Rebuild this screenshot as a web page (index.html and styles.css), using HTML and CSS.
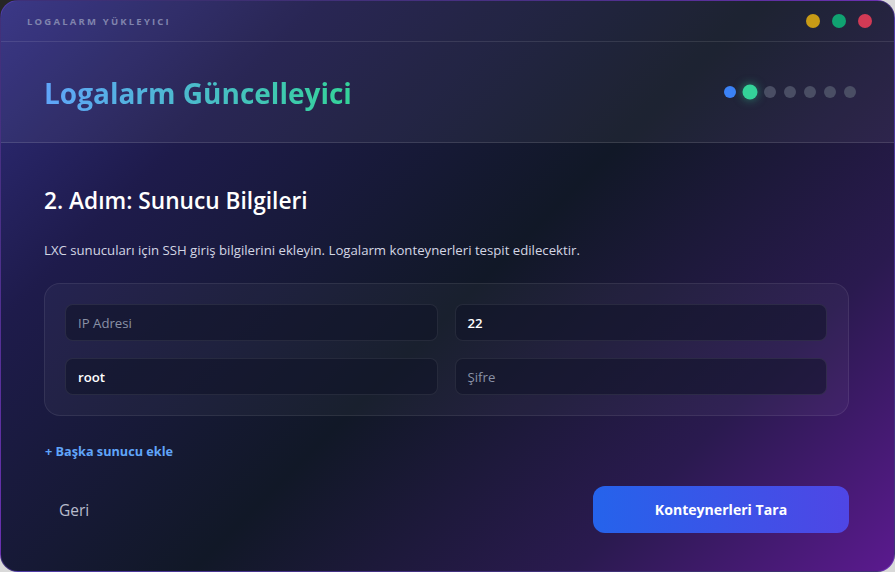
FILE: index.html
```html
<!DOCTYPE html>
<html lang="tr">
<head>
<meta charset="utf-8">
<title>Logalarm Güncelleyici</title>
<link rel="stylesheet" href="styles.css">
</head>
<body>
<div class="window">
  <div class="titlebar">
    <span class="app-label">LOGALARM YÜKLEYICI</span>
    <div class="controls">
      <span class="ctl ctl-min"></span>
      <span class="ctl ctl-max"></span>
      <span class="ctl ctl-close"></span>
    </div>
  </div>
  <div class="header">
    <h1 class="brand">Logalarm Güncelleyici</h1>
    <div class="steps">
      <span class="step done"></span>
      <span class="step active"></span>
      <span class="step"></span>
      <span class="step"></span>
      <span class="step"></span>
      <span class="step"></span>
      <span class="step"></span>
    </div>
  </div>
  <div class="content">
    <h2 class="step-title">2. Adım: Sunucu Bilgileri</h2>
    <p class="step-desc">LXC sunucuları için SSH giriş bilgilerini ekleyin. Logalarm konteynerleri tespit edilecektir.</p>
    <div class="server-card">
      <div class="field placeholder">IP Adresi</div>
      <div class="field value">22</div>
      <div class="field value">root</div>
      <div class="field placeholder">Şifre</div>
    </div>
    <div class="add-server">+ Başka sunucu ekle</div>
    <div class="actions">
      <span class="btn-back">Geri</span>
      <span class="btn-primary">Konteynerleri Tara</span>
    </div>
  </div>
</div>
</body>
</html>
```

FILE: styles.css
```css
* { box-sizing: border-box; margin: 0; padding: 0; }
html, body { width: 895px; height: 572px; overflow: hidden; }
body {
  background: linear-gradient(160deg, #262626 0%, #262626 8%, #d9d9d9 9%, #d9d9d9 100%);
  font-family: "Open Sans", "Noto Sans", sans-serif;
  color: #fff;
}
.window {
  width: 895px;
  height: 572px;
  border-radius: 18px;
  overflow: hidden;
  border: 1px solid rgba(139, 92, 246, 0.35);
  background: linear-gradient(135deg, #312e81 0%, #1e1b4b 22%, #111827 52%, #2a1a4f 78%, #5b1a8f 100%);
  display: flex;
  flex-direction: column;
}
.titlebar {
  height: 41px;
  flex: none;
  display: flex;
  align-items: center;
  justify-content: space-between;
  padding: 0 22px 0 26px;
  background: rgba(255, 255, 255, 0.05);
  border-bottom: 1px solid rgba(255, 255, 255, 0.1);
}
.app-label {
  font-size: 9.5px;
  font-weight: 700;
  letter-spacing: 2.2px;
  color: #8084ad;
}
.controls { display: flex; gap: 12px; }
.ctl { width: 14px; height: 14px; border-radius: 50%; display: block; }
.ctl-min { background: #c89b16; }
.ctl-max { background: #10a271; }
.ctl-close { background: #d13a55; }
.header {
  height: 101px;
  flex: none;
  display: flex;
  align-items: center;
  justify-content: space-between;
  padding: 0 38px 0 43px;
  background: rgba(255, 255, 255, 0.05);
  border-bottom: 1px solid rgba(255, 255, 255, 0.12);
}
.brand {
  font-size: 28px;
  font-weight: 700;
  letter-spacing: 0;
  background: linear-gradient(90deg, #60a5fa 0%, #34d399 100%);
  -webkit-background-clip: text;
  background-clip: text;
  color: transparent;
  margin-top: 2px;
}
.steps { display: flex; gap: 8px; align-items: center; }
.step { width: 12px; height: 12px; border-radius: 50%; background: #4a4e64; display: block; }
.step.done { background: #3b82f6; }
.step.active {
  background: #34d399;
  transform: scale(1.25);
  box-shadow: 0 0 8px rgba(52, 211, 153, 0.55);
}
.content {
  flex: 1;
  padding: 44px 45px 0 43px;
  display: flex;
  flex-direction: column;
}
.step-title {
  font-size: 22.7px;
  font-weight: 600;
  color: #ffffff;
  line-height: 28px;
}
.step-desc {
  margin-top: 26px;
  font-size: 13.2px;
  color: #d3d6e4;
  line-height: 18px;
}
.server-card {
  margin-top: 24px;
  border-radius: 16px;
  background: rgba(255, 255, 255, 0.035);
  border: 1px solid rgba(255, 255, 255, 0.08);
  padding: 20px 21px 20px 20px;
  display: grid;
  grid-template-columns: 1fr 1fr;
  gap: 17px 17px;
}
.field {
  height: 37px;
  border-radius: 8px;
  background: rgba(15, 19, 38, 0.55);
  border: 1px solid rgba(255, 255, 255, 0.08);
  display: flex;
  align-items: center;
  padding: 0 12px;
  font-size: 13.2px;
}
.field.placeholder { color: #8a91a6; }
.field.value { color: #ffffff; font-weight: 600; }
.add-server {
  margin-top: 26px;
  font-size: 12.7px;
  font-weight: 700;
  color: #60a5fa;
  padding-left: 1px;
}
.actions {
  margin-top: 26px;
  display: flex;
  align-items: center;
  justify-content: space-between;
}
.btn-back {
  font-size: 15.5px;
  color: #b8bccc;
  padding: 0 15px;
}
.btn-primary {
  width: 256px;
  height: 47px;
  border-radius: 12px;
  background: linear-gradient(90deg, #2563eb 0%, #4f46e5 100%);
  display: flex;
  align-items: center;
  justify-content: center;
  font-size: 14.1px;
  font-weight: 700;
  color: #ffffff;
}
```
